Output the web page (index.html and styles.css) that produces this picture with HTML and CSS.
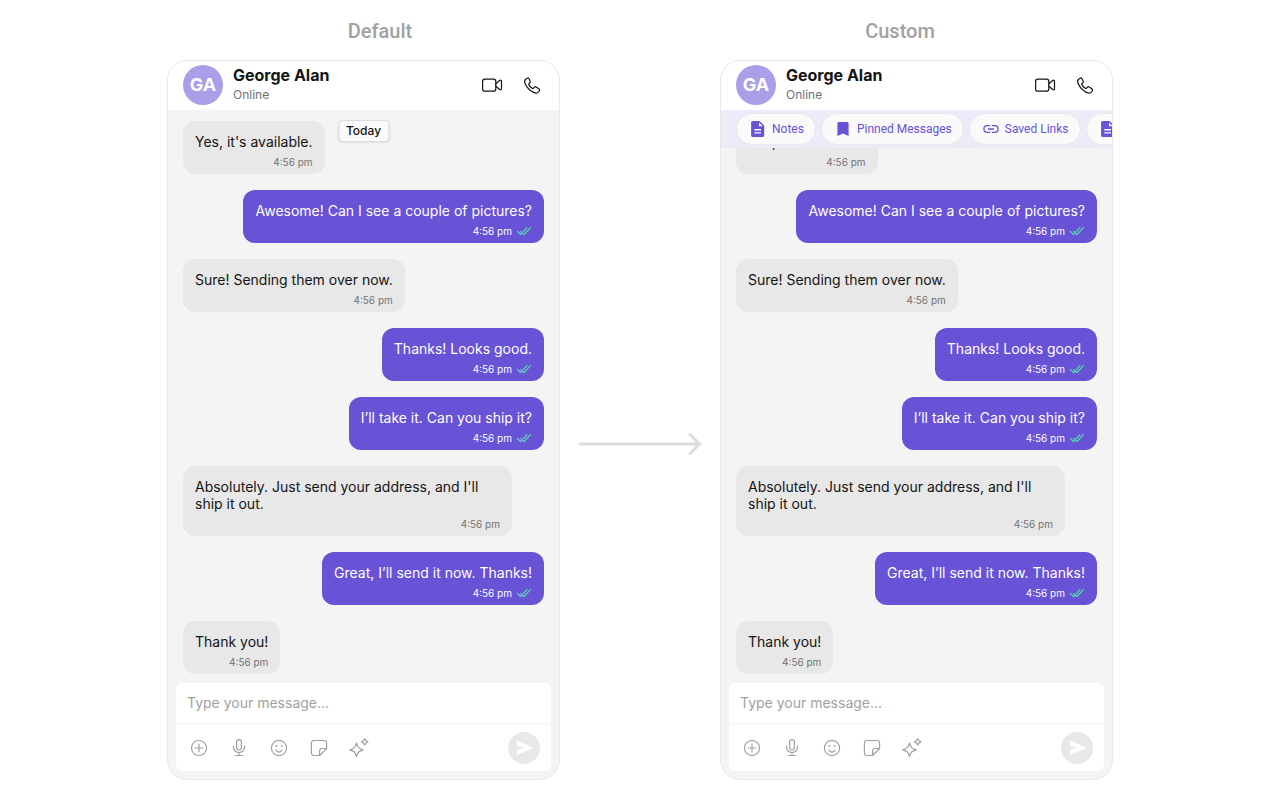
FILE: index.html
```html
<!DOCTYPE html>
<html lang="en">

<head>
    <meta charset="UTF-8">
    <meta name="viewport" content="width=device-width, initial-scale=1.0">
    <title>Message header</title>
    <link rel="stylesheet" href="styles.css">
</head>

<body>
    <!-- shared icons -->
    <svg class="sprite" aria-hidden="true">
        <symbol id="video" viewBox="0 0 24 24">
            <rect x="2.6" y="6.1" width="13.2" height="12" rx="2.2" />
            <path d="M15.8 10.8l3.900-3.300c.8-.6 1.800-.3 1.800.7v7.600c0 1-1 1.300-1.800.7l-3.900-3.300" />
        </symbol>
        <symbol id="phone" viewBox="0 0 24 24">
            <path d="M7.2 5.2L5.6 6.3C4.4 7.2 4.4 9 5.2 10.8c1.7 3.9 4.6 6.8 8.4 8.6 2 .9 3.9.9 4.9-.4l.9-1.3c.4-.6.3-1.3-.3-1.7l-3-2c-.6-.4-1.3-.3-1.7.2l-.8.9c-.4.4-.9.4-1.4.1-1.4-.9-2.5-2-3.3-3.3-.3-.5-.2-1 .2-1.4l.8-.7c.5-.5.6-1.1.2-1.7L8.9 5.5c-.4-.6-1.1-.7-1.7-.3z" />
        </symbol>
        <symbol id="ticks" viewBox="0 0 16 12">
            <path d="M1.4 6.4l3.200 3.200 1.400-1.400M11 2.600L7.400 6.600M4.800 6.400L8 9.600l6.400-7" />
        </symbol>
        <symbol id="plus" viewBox="0 0 24 24">
            <circle cx="12" cy="12" r="7.5" />
            <path d="M12 8.2v7.6M8.2 12h7.6" />
        </symbol>
        <symbol id="mic" viewBox="0 0 24 24">
            <rect x="9.6" y="3.6" width="4.8" height="10.4" rx="2.4" />
            <path d="M6.5 10v1.3a5.5 5.2 0 0 0 11 0V10M12 16.500v3M8.300 19.500h7.400" />
        </symbol>
        <symbol id="smile" viewBox="0 0 24 24">
            <circle cx="12" cy="12" r="7.6" />
            <path d="M9 14.1c.6 1.3 1.7 2 3 2s2.400-.7 3-2" />
            <circle class="dot" cx="9.400" cy="10" r=".9" />
            <circle class="dot" cx="14.600" cy="10" r=".9" />
        </symbol>
        <symbol id="sticker" viewBox="0 0 24 24">
            <path d="M6.800 4.500h10.400a2.400 2.400 0 0 1 2.400 2.400v5.600l-7 7H6.800a2.400 2.400 0 0 1-2.400-2.400V6.900a2.400 2.400 0 0 1 2.400-2.400z" />
            <path d="M19.600 12.500h-4.600a2.400 2.400 0 0 0-2.400 2.400v4.600" />
        </symbol>
        <symbol id="sparkle" viewBox="0 0 24 24">
            <path d="M9.500 7c1.200 4.400 2.300 5.500 6.800 6.800-4.500 1.300-5.600 2.400-6.800 6.800-1.200-4.400-2.300-5.500-6.800-6.800C7.200 12.500 8.300 11.400 9.500 7z" />
            <path d="M17.700 2.600c.6 2.200 1.100 2.700 3.300 3.300-2.200.6-2.700 1.100-3.300 3.300-.6-2.200-1.100-2.700-3.300-3.300 2.200-.6 2.700-1.100 3.300-3.300z" />
        </symbol>
        <symbol id="send" viewBox="0 0 24 24">
            <path d="M5 4.500L21.500 11.700 5 19v-5.600l8-1.700-8-1.700z" />
        </symbol>
        <symbol id="note" viewBox="0 0 16 16">
            <path fill-rule="evenodd" d="M2.800 0h6.700l4.700 4.700v9.500c0 1-.7 1.800-1.700 1.800H2.800c-1 0-1.700-.8-1.700-1.800V1.800C1.100.8 1.800 0 2.800 0zM9 1.400v3.800h3.800zM4.300 8.100v1.300H11V8.100zM4.300 11.300v1.300H11v-1.300z" />
        </symbol>
        <symbol id="bookmark" viewBox="0 0 16 16">
            <path d="M4 1h8c1 0 1.600.7 1.600 1.600V15L8 12.500 2.400 15V2.600C2.400 1.700 3 1 4 1z" />
        </symbol>
        <symbol id="link" viewBox="0 0 16 16">
            <path d="M7.200 4.700H4.200a3.300 3.300 0 0 0 0 6.600H7.200M8.800 4.700h3a3.300 3.300 0 0 1 0 6.600h-3M5 8h6" />
        </symbol>
    </svg>

    <header class="labels">
        <h1>Default</h1>
        <h1>Custom</h1>
    </header>

    <main class="compare">
        <section class="chat">
            <div class="chat-header">
                <div class="avatar">GA</div>
                <div class="user">
                    <h2>George Alan</h2>
                    <p>Online</p>
                </div>
                <button class="call" aria-label="Video call"><svg><use href="#video" /></svg></button>
                <button class="call" aria-label="Voice call"><svg><use href="#phone" /></svg></button>
            </div>
            <div class="messages">
                <span class="today">Today</span>
                <div class="msg in"><p>Yes, it's available.</p><time>4:56 pm</time></div>
                <div class="msg out"><p>Awesome! Can I see a couple of pictures?</p><time>4:56 pm <svg><use href="#ticks" /></svg></time></div>
                <div class="msg in"><p>Sure! Sending them over now.</p><time>4:56 pm</time></div>
                <div class="msg out"><p>Thanks! Looks good.</p><time>4:56 pm <svg><use href="#ticks" /></svg></time></div>
                <div class="msg out"><p>I’ll take it. Can you ship it?</p><time>4:56 pm <svg><use href="#ticks" /></svg></time></div>
                <div class="msg in"><p>Absolutely. Just send your address, and I'll ship it out.</p><time>4:56 pm</time></div>
                <div class="msg out"><p>Great, I’ll send it now. Thanks!</p><time>4:56 pm <svg><use href="#ticks" /></svg></time></div>
                <div class="msg in"><p>Thank you!</p><time>4:56 pm</time></div>
            </div>
            <form class="composer">
                <input type="text" placeholder="Type your message..." aria-label="Message">
                <div class="tools">
                    <button type="button" aria-label="Attach"><svg><use href="#plus" /></svg></button>
                    <button type="button" aria-label="Record"><svg><use href="#mic" /></svg></button>
                    <button type="button" aria-label="Emoji"><svg><use href="#smile" /></svg></button>
                    <button type="button" aria-label="Stickers"><svg><use href="#sticker" /></svg></button>
                    <button type="button" aria-label="AI"><svg><use href="#sparkle" /></svg></button>
                    <button class="send" type="submit" aria-label="Send"><svg><use href="#send" /></svg></button>
                </div>
            </form>
        </section>

        <svg class="arrow" viewBox="0 0 124 24" aria-hidden="true">
            <path d="M2 12h120M112 2.500l9.500 9.500-9.500 9.500" />
        </svg>

        <section class="chat">
            <div class="chat-header">
                <div class="avatar">GA</div>
                <div class="user">
                    <h2>George Alan</h2>
                    <p>Online</p>
                </div>
                <button class="call" aria-label="Video call"><svg><use href="#video" /></svg></button>
                <button class="call" aria-label="Voice call"><svg><use href="#phone" /></svg></button>
            </div>
            <nav class="shortcuts">
                <button><svg><use href="#note" /></svg>Notes</button>
                <button><svg><use href="#bookmark" /></svg>Pinned Messages</button>
                <button><svg class="link"><use href="#link" /></svg>Saved Links</button>
                <button aria-label="More notes"><svg><use href="#note" /></svg></button>
            </nav>
            <div class="messages">
                <div class="msg in"><p>Yes, it's available.</p><time>4:56 pm</time></div>
                <div class="msg out"><p>Awesome! Can I see a couple of pictures?</p><time>4:56 pm <svg><use href="#ticks" /></svg></time></div>
                <div class="msg in"><p>Sure! Sending them over now.</p><time>4:56 pm</time></div>
                <div class="msg out"><p>Thanks! Looks good.</p><time>4:56 pm <svg><use href="#ticks" /></svg></time></div>
                <div class="msg out"><p>I’ll take it. Can you ship it?</p><time>4:56 pm <svg><use href="#ticks" /></svg></time></div>
                <div class="msg in"><p>Absolutely. Just send your address, and I'll ship it out.</p><time>4:56 pm</time></div>
                <div class="msg out"><p>Great, I’ll send it now. Thanks!</p><time>4:56 pm <svg><use href="#ticks" /></svg></time></div>
                <div class="msg in"><p>Thank you!</p><time>4:56 pm</time></div>
            </div>
            <form class="composer">
                <input type="text" placeholder="Type your message..." aria-label="Message">
                <div class="tools">
                    <button type="button" aria-label="Attach"><svg><use href="#plus" /></svg></button>
                    <button type="button" aria-label="Record"><svg><use href="#mic" /></svg></button>
                    <button type="button" aria-label="Emoji"><svg><use href="#smile" /></svg></button>
                    <button type="button" aria-label="Stickers"><svg><use href="#sticker" /></svg></button>
                    <button type="button" aria-label="AI"><svg><use href="#sparkle" /></svg></button>
                    <button class="send" type="submit" aria-label="Send"><svg><use href="#send" /></svg></button>
                </div>
            </form>
        </section>
    </main>
</body>

</html>
```

FILE: styles.css
```css
* {
    box-sizing: border-box;
    margin: 0;
    padding: 0;
}

body {
    display: flex;
    flex-direction: column;
    height: 100vh;
    padding: 18px 20px 20px;
    background: #ffffff;
    color: #141414;
    font-family: Inter, "Liberation Sans", sans-serif;
}

button {
    border: 0;
    background: none;
    color: inherit;
    font: inherit;
    cursor: pointer;
}

svg {
    display: block;
    flex: none;
    width: 24px;
    height: 24px;
    fill: none;
    stroke: currentColor;
    stroke-linecap: round;
    stroke-linejoin: round;
}

.sprite {
    position: absolute;
    width: 0;
    height: 0;
}

.labels {
    display: grid;
    grid-template-columns: repeat(2, 520px);
    justify-content: center;
    margin-bottom: 16px;
    text-align: center;
}

.labels h1 {
    color: #a1a1a1;
    font-family: Roboto, sans-serif;
    font-size: 20px;
    font-weight: 500;
    line-height: 26px;
}

.compare {
    display: flex;
    flex: 1;
    justify-content: center;
    gap: 18px;
    min-height: 0;
}

.arrow {
    width: 124px;
    height: 24px;
    align-self: center;
    margin-top: 48px;
    stroke: #dcdcdc;
    stroke-width: 3;
}

.chat {
    display: flex;
    flex: 0 1 393px;
    flex-direction: column;
    min-width: 0;
    overflow: hidden;
    border: 1px solid #e8e8e8;
    border-radius: 20px;
    background: #f4f4f4;
}

/* header */
.chat-header {
    display: flex;
    flex: none;
    align-items: center;
    gap: 16px;
    padding: 4px 15px 5px;
    background: #ffffff;
}

.avatar {
    width: 40px;
    height: 40px;
    border-radius: 50%;
    background: #aa9ee8;
    color: #ffffff;
    font-size: 18px;
    font-weight: 700;
    line-height: 40px;
    text-align: center;
}

.user {
    flex: 1;
    margin-left: -6px;
}

.user h2 {
    font-size: 16px;
    font-weight: 700;
    line-height: 20px;
}

.user p {
    color: #727272;
    font-size: 12px;
    line-height: 20px;
}

.call svg {
    stroke-width: 1.2;
}

/* custom header view */
.shortcuts {
    display: flex;
    gap: 5px;
    padding: 3px 0 3px 15px;
    background: #edeafa;
}

.shortcuts button {
    display: flex;
    flex: none;
    align-items: center;
    gap: 6px;
    height: 32px;
    padding: 0 11px 0 13px;
    border: 1px solid #e8e8e8;
    border-radius: 16px;
    background: #fafafa;
    color: #6852d6;
    font-family: Roboto, sans-serif;
    font-size: 12px;
}

.shortcuts svg {
    width: 16px;
    height: 16px;
    fill: currentColor;
    stroke: none;
}

.shortcuts .link {
    fill: none;
    stroke: currentColor;
    stroke-width: 1.3;
    stroke-linecap: butt;
}

/* messages */
.messages {
    position: relative;
    display: flex;
    flex: 1;
    flex-direction: column;
    justify-content: flex-end;
    gap: 16px;
    min-height: 0;
    padding: 0 15px 9px;
    overflow: hidden;
}

.today {
    position: absolute;
    top: 10px;
    left: 50%;
    transform: translateX(-50%);
    padding: 0 7px;
    border: 1px solid #dcdcdc;
    border-radius: 4px;
    background: #fafafa;
    box-shadow: 0 1px 2px rgba(0, 0, 0, 0.08);
    font-size: 12px;
    font-weight: 500;
    line-height: 20px;
}

.msg {
    flex: none;
    align-self: flex-start;
    max-width: 329px;
    padding: 12px 12px 4px;
    border-radius: 12px;
    background: #e8e8e8;
    font-size: 14px;
    line-height: 17px;
}

.msg time {
    display: flex;
    align-items: center;
    justify-content: flex-end;
    gap: 4px;
    margin-top: 4px;
    color: #727272;
    font-size: 10px;
    line-height: 16px;
}

.msg svg {
    width: 16px;
    height: 12px;
    color: #56e0b0;
    stroke-width: 1.2;
}

.out {
    align-self: flex-end;
    background: #6852d6;
    color: #ffffff;
}

.out time {
    color: #ffffff;
}

/* composer */
.composer {
    flex: none;
    margin: 0 8px 8px;
    border-radius: 6px;
    background: #ffffff;
    overflow: hidden;
}

.composer input {
    display: block;
    width: 100%;
    height: 41px;
    padding: 0 11px 2px;
    border: 0;
    border-bottom: 1px solid #f4f4f4;
    outline: 0;
    background: none;
    font: inherit;
    font-size: 14px;
}

.composer input::placeholder {
    color: #a1a1a1;
}

.tools {
    display: flex;
    align-items: center;
    gap: 16px;
    height: 47px;
    padding: 0 11px;
    color: #a1a1a1;
}

.tools svg {
    stroke-width: 1.2;
}

.dot {
    fill: currentColor;
    stroke: none;
}

.tools .send {
    display: grid;
    place-items: center;
    width: 32px;
    height: 32px;
    margin-left: auto;
    border-radius: 50%;
    background: #e8e8e8;
    color: #ffffff;
}

.send svg {
    fill: currentColor;
    stroke: none;
}
```
